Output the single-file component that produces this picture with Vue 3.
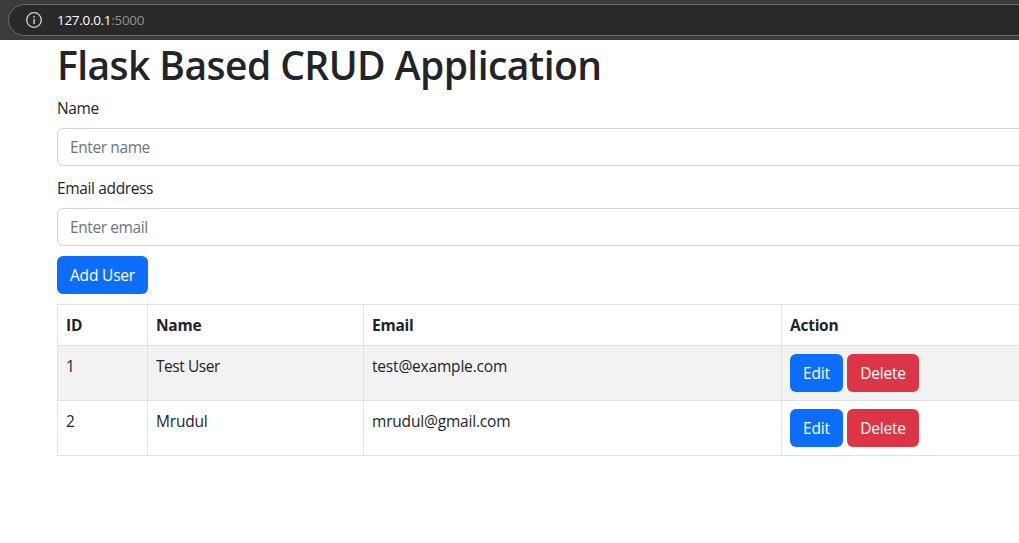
<script setup>
const users = [
  { id: 1, name: 'Test User', email: 'test@example.com', nameClass: 'tight' },
  { id: 2, name: 'Mrudul', email: 'mrudul@gmail.com', nameClass: '' },
]
</script>

<template>
  <div class="page">
    <header class="browser-bar">
      <div class="address">
        <svg class="info" width="16" height="16" viewBox="0 0 16 16" fill="none">
          <circle cx="8" cy="8" r="7.3" stroke="#d6d6d6" stroke-width="1.3" />
          <rect x="7.3" y="4" width="1.5" height="1.6" fill="#c8c8c8" />
          <rect x="7.3" y="6.8" width="1.5" height="5.2" fill="#c8c8c8" />
        </svg>
        <span class="host">127.0.0.1</span><span class="port">:5000</span>
      </div>
    </header>
    <main class="content">
      <h1>Flask Based CRUD Application</h1>
      <form class="form" @submit.prevent>
        <div class="group">
          <label for="name">Name</label>
          <input id="name" type="text" placeholder="Enter name" />
        </div>
        <div class="group">
          <label for="email">Email address</label>
          <input id="email" type="email" placeholder="Enter email" />
        </div>
        <button class="btn primary add" type="submit">Add User</button>
      </form>
      <table>
        <colgroup>
          <col class="c-id" />
          <col class="c-name" />
          <col class="c-email" />
          <col />
        </colgroup>
        <thead>
          <tr><th>ID</th><th>Name</th><th>Email</th><th>Action</th></tr>
        </thead>
        <tbody>
          <tr v-for="user in users" :key="user.id">
            <td>{{ user.id }}</td>
            <td :class="user.nameClass">{{ user.name }}</td>
            <td>{{ user.email }}</td>
            <td>
              <div class="actions">
                <button class="btn primary edit" type="button">Edit</button>
                <button class="btn danger delete" type="button">Delete</button>
              </div>
            </td>
          </tr>
        </tbody>
      </table>
    </main>
  </div>
</template>

<style>
body {
  margin: 0;
  background: #fff;
}
</style>

<style scoped>
.page {
  height: 543px;
  overflow: hidden;
  color: #212529;
  font: 15.5px/24px "Open Sans", "Noto Sans", sans-serif;
  letter-spacing: -0.19px;
}
.browser-bar {
  box-sizing: border-box;
  height: 40px;
  padding: 4px 0 0 8px;
  background: #3b3b3b;
  overflow: hidden;
}
.address {
  box-sizing: border-box;
  display: flex;
  align-items: center;
  width: 1100px;
  height: 32px;
  padding-left: 17px;
  border: 1px solid #6b6b6b;
  border-radius: 16px;
  background: #292929;
  font-size: 13.5px;
  letter-spacing: -0.3px;
}
.info {
  margin-right: 15px;
}
.host {
  color: #fff;
}
.port {
  color: #8f8f8f;
}
.content {
  width: 1100px;
  padding-left: 57px;
}
h1 {
  margin: 0 0 8px;
  padding-top: 1px;
  height: 47px;
  font-size: 39px;
  font-weight: 600;
  line-height: 48px;
  letter-spacing: -0.56px;
  white-space: nowrap;
}
.form {
  display: flex;
  flex-direction: column;
  align-items: flex-start;
  gap: 10px;
}
.group {
  width: 100%;
}
label {
  display: block;
  margin-bottom: 8px;
  letter-spacing: -0.36px;
}
input {
  display: block;
  box-sizing: border-box;
  width: 100%;
  height: 38px;
  padding: 6px 12px;
  border: 1px solid #ced4da;
  border-radius: 6px;
  background: #fff;
  color: inherit;
  font: inherit;
  letter-spacing: -0.4px;
}
input::placeholder {
  color: #6c757d;
  opacity: 1;
}
.btn {
  box-sizing: border-box;
  height: 38px;
  padding: 0;
  border: 0;
  border-radius: 6px;
  color: #fff;
  font: inherit;
  letter-spacing: inherit;
}
.primary {
  background: #0d6efd;
}
.danger {
  background: #dc3545;
}
.add {
  width: 91px;
}
.edit {
  width: 53px;
}
.delete {
  width: 72px;
}
.actions {
  display: flex;
  gap: 4px;
}
table {
  width: 100%;
  margin-top: 10px;
  border-spacing: 0;
  table-layout: fixed;
}
.c-id {
  width: 90px;
}
.c-name {
  width: 216px;
}
.c-email {
  width: 418px;
}
th,
td {
  padding: 8px;
  border: solid #dee2e6;
  border-width: 1px 0 0 1px;
  text-align: left;
  vertical-align: top;
}
th {
  font-weight: 700;
  letter-spacing: -0.25px;
}
.tight {
  letter-spacing: -0.45px;
}
tbody tr:nth-child(odd) td {
  background: #f2f2f2;
}
tbody tr:last-child td {
  border-bottom-width: 1px;
}
</style>
